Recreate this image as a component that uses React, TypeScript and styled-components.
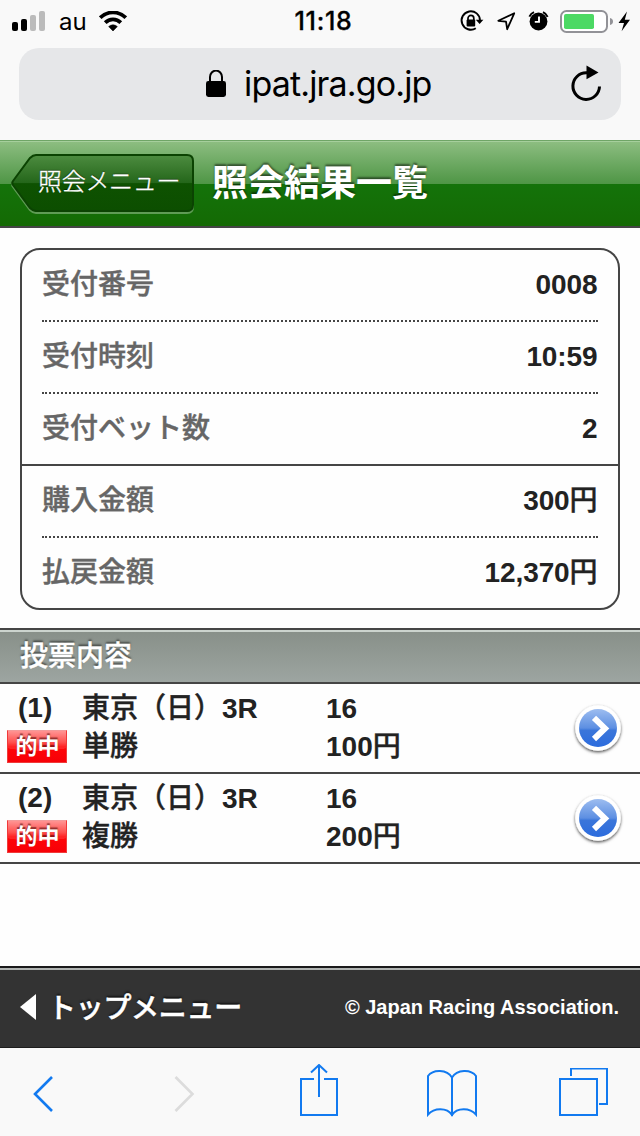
import React from "react";
import styled, { createGlobalStyle } from "styled-components";

const Global = createGlobalStyle`
  *, *::before, *::after { box-sizing: border-box; }
  body {
    margin: 0;
    background: #fff;
    font-family: "Liberation Sans", "Noto Sans CJK JP", sans-serif;
    color: #222;
  }
`;

const Screen = styled.div`
  width: 640px;
  height: 1136px;
  display: flex;
  flex-direction: column;
  overflow: hidden;
  background: #fefefe;
`;

const BrowserTop = styled.header`
  height: 140px;
  background: #f9f9f9;
  font-family: Inter, sans-serif;
  color: #000;
`;

const StatusBar = styled.div`
  height: 40px;
  padding: 0 10px 0 12px;
  display: grid;
  grid-template-columns: 1fr auto 1fr;
  align-items: center;
`;

const StatusGroup = styled.div<{ $end?: boolean }>`
  display: flex;
  align-items: center;
  justify-content: ${(p) => (p.$end ? "flex-end" : "flex-start")};
  padding-bottom: ${(p) => (p.$end ? "2px" : "0")};
  svg { display: block; flex: none; }
`;

const Carrier = styled.span`
  font-size: 24px;
  line-height: 40px;
  width: 27px;
  margin: 0 13px 0 13px;
  padding-top: 2px;
  height: 42px;
`;

const Clock = styled.span`
  font-size: 25px;
  font-weight: 500;
  line-height: 40px;
  letter-spacing: 0.7px;
  -webkit-text-stroke: 0.3px #000;
  margin-left: 5px;
`;

const AddressBar = styled.div`
  height: 72px;
  margin: 8px 19px 0;
  border-radius: 20px;
  background: #e6e7e9;
  display: flex;
  align-items: center;
  padding: 0 18px 0 186px;
`;

const Url = styled.span`
  flex: 1;
  margin-left: 17px;
  font-size: 34px;
  line-height: 74px;
  letter-spacing: -0.85px;
`;

const TitleBar = styled.div`
  height: 88px;
  border-top: 1px solid #6fa566;
  border-bottom: 2px solid #454545;
  background: linear-gradient(#a6cf9c 0 1px, #8cbd80 1px, #4f9646 50%, #14730a 50%, #146a04 100%);
  background-clip: padding-box;
  display: flex;
  align-items: center;
`;

const BackButton = styled.div`
  position: relative;
  width: 186px;
  height: 62px;
  margin-left: 9px;
  svg { position: absolute; inset: 0; }
`;

const BackLabel = styled.span`
  position: relative;
  display: block;
  padding-left: 29px;
  font-size: 24px;
  line-height: 57px;
  letter-spacing: -0.3px;
  font-weight: 300;
  -webkit-text-stroke: 0.35px #fff;
  color: #fff;
  text-shadow: 0 -1px 1px rgba(0, 0, 0, 0.5);
`;

const Title = styled.h1`
  margin: 0 0 0 17px;
  font-size: 36px;
  line-height: 86px;
  font-weight: 700;
  color: #fff;
  text-shadow: 0 -2px 2px rgba(0, 0, 0, 0.5);
`;

const Summary = styled.section`
  margin: 20px 20px 18px;
  border: 2px solid #454545;
  border-radius: 20px;
`;

const SummaryGroup = styled.div`
  padding: 0 20px;
  & + & { border-top: 2px solid #454545; }
`;

const SummaryRow = styled.div`
  display: flex;
  justify-content: space-between;
  height: 70px;
  font-size: 28px;
  line-height: 70px;
  font-weight: 700;
  & + & {
    height: 72px;
    border-top: 2px dotted #454545;
  }
`;

const Label = styled.span`
  color: #666;
  font-weight: 500;
  -webkit-text-stroke: 0.4px #666;
`;

const Value = styled.span`
  letter-spacing: -0.1px;
  padding-right: 0.5px;
`;

const SectionTitle = styled.h2`
  margin: 0;
  height: 56px;
  padding-left: 20px;
  border-top: 2px solid #454545;
  border-bottom: 2px solid #454545;
  background: linear-gradient(#ccd4ce 0 2px, #889089 2px, #9da5a1 100%);
  background-clip: padding-box;
  color: #fff;
  font-size: 28px;
  font-weight: 500;
  -webkit-text-stroke: 0.4px #fff;
  line-height: 54px;
  text-shadow: 0 -2px 2px rgba(0, 0, 0, 0.5);
`;

const BetRow = styled.div`
  height: 90px;
  border-bottom: 2px solid #454545;
  display: grid;
  grid-template-columns: 82px 244px 1fr 49px;
  padding: 6px 18px 6px 0;
  font-size: 28px;
  line-height: 38px;
  font-weight: 700;
`;

const BetCell = styled.div`
  display: flex;
  flex-direction: column;
`;

const Kanji = styled.span`
  font-weight: 500;
  -webkit-text-stroke: 0.4px #222;
`;

const BetNumber = styled.span`
  padding-left: 18px;
  line-height: 36px;
  height: 38px;
`;

const HitBadge = styled.span`
  width: 60px;
  height: 33px;
  margin: 2px 0 0 7px;
  padding-left: 1px;
  border: 1px solid #f03a3a;
  border-top-color: #f39a9a;
  background:
    radial-gradient(ellipse 60px 20px at 50% 0, rgba(255, 255, 255, 0.12) 98%, transparent 100%),
    linear-gradient(#ff8584, #ff3a38 36%, #ff0608 50%, #f70007);
  color: #fff;
  font-size: 22px;
  line-height: 32px;
  text-align: center;
  text-shadow: 0 -2px 1px rgba(60, 0, 0, 0.55);
`;

const Go = styled.svg`
  display: block;
  align-self: center;
  margin: 2px 0 0 -2px;
`;

const Gap = styled.div`
  flex: 1;
`;

const Footer = styled.footer`
  height: 82px;
  border-top: 2px solid #1a1a1a;
  border-bottom: 1px solid #1d1d1d;
  background: linear-gradient(#b0b4b2 0 2px, #333 2px);
  background-clip: padding-box;
  color: #fff;
  display: flex;
  align-items: center;
  justify-content: space-between;
  padding: 0 21px 0 20px;
`;

const TopLink = styled.span`
  display: flex;
  align-items: center;
  font-size: 28px;
  line-height: 78px;
  padding-top: 2px;
  font-weight: 500;
  -webkit-text-stroke: 0.5px #fff;
  letter-spacing: -0.3px;
  text-shadow: 0 -2px 2px rgba(0, 0, 0, 0.6);
  svg { margin: 0 12px 3px 0; }
`;

const Copyright = styled.span`
  font-size: 20px;
  font-weight: 700;
  line-height: 76px;
  padding-bottom: 2px;
`;

const Toolbar = styled.nav`
  height: 88px;
  background: #f9f9f9;
  display: grid;
  grid-template-columns: 141px 126px 127px 132px 50px;
  align-items: center;
  padding: 2px 0 0 33px;
  svg { display: block; }
`;

const summary = [
  [
    { label: "受付番号", value: "0008" },
    { label: "受付時刻", value: "10:59" },
    { label: "受付ベット数", value: "2" },
  ],
  [
    { label: "購入金額", value: "300", unit: "円" },
    { label: "払戻金額", value: "12,370", unit: "円" },
  ],
] as { label: string; value: string; unit?: string }[][];

const bets = [
  { no: "(1)", kind: "単勝", amount: "100" },
  { no: "(2)", kind: "複勝", amount: "200" },
];

const GoIcon = ({ id }: { id: string }) => (
  <Go width="54" height="56" viewBox="0 0 54 56">
    <defs>
      <linearGradient id={`${id}b`} x1="0" y1="0" x2="0" y2="1">
        <stop offset="0" stopColor="#9dbdf0" />
        <stop offset="0.5" stopColor="#5d8fe2" />
        <stop offset="0.56" stopColor="#3b76da" />
        <stop offset="1" stopColor="#2c6cdd" />
      </linearGradient>
      <filter id={`${id}s`} x="-20%" y="-20%" width="140%" height="150%">
        <feDropShadow dx="0" dy="1.5" stdDeviation="1.8" floodColor="#000" floodOpacity="0.7" />
      </filter>
    </defs>
    <circle cx="27" cy="27" r="22.8" fill="#fff" filter={`url(#${id}s)`} />
    <circle cx="27" cy="27" r="19" fill={`url(#${id}b)`} />
    <path d="M23 16.8 34 27.4 23 38" fill="none" stroke="#fff" strokeWidth="6" />
  </Go>
);

export default function App() {
  return (
    <Screen>
      <Global />
      <BrowserTop>
        <StatusBar>
          <StatusGroup>
            <svg width="34" height="20" viewBox="0 0 34 20">
              <rect x="0" y="11" width="6" height="9" rx="2" />
              <rect x="9" y="8" width="6" height="12" rx="2" />
              <rect x="18" y="4" width="6" height="16" rx="2" fill="#bbb" />
              <rect x="27" y="0" width="6" height="20" rx="2" fill="#bbb" />
            </svg>
            <Carrier>au</Carrier>
            <svg width="28" height="20" viewBox="0 0 28 20">
              <g fill="none" stroke="#000" strokeWidth="3.8">
                <path d="M1.2 6.7A18.2 18.2 0 0 1 26.8 6.7" />
                <path d="M6.2 11.6A11 11 0 0 1 21.8 11.6" />
              </g>
              <path d="M14 20 9.7 15.6A6.2 6.2 0 0 1 18.3 15.6Z" stroke="#000" strokeWidth="0.6" />
            </svg>
          </StatusGroup>
          <Clock>11:18</Clock>
          <StatusGroup $end>
            <svg width="172" height="26" viewBox="0 0 172 26">
              <g fill="none" stroke="#000" strokeWidth="1.9">
                <path d="M17.8 21.2A9.2 9.2 0 1 1 22 13.5" />
                <path d="M10 13.5V11.3A2.9 2.9 0 0 1 15.8 11.3V13.5" strokeWidth="1.7" />
                <path d="M40.3 13.8 56.2 6.3 49.2 22.2 48 14.6Z" strokeLinejoin="round" strokeWidth="1.8" />
              </g>
              <rect x="8.6" y="12.6" width="8.6" height="6.8" rx="1" />
              <path d="M17.8 12.8H25.4L21.6 17Z" />
              <circle cx="80.5" cy="14.5" r="8.9" />
              <path d="M71.4 9.6A9 9 0 0 1 76 5.2M85 5.2a9 9 0 0 1 4.6 4.6" stroke="#000" strokeWidth="2" fill="none" />
              <path d="M81 9.6V14.9H76.8" stroke="#fff" strokeWidth="1.9" fill="none" />
              <rect x="103" y="4" width="46" height="21" rx="5.5" fill="#fff" stroke="#929297" strokeWidth="2" />
              <rect x="106" y="7" width="30" height="15" rx="1.8" fill="#4cd964" />
              <path d="M152 11q3 .8 3 3.5t-3 3.5Z" fill="#929297" />
              <path d="M169 4.5 160.500 16H166L163.600 24.300 172 12.800H166.800Z" />
            </svg>
          </StatusGroup>
        </StatusBar>
        <AddressBar>
          <svg width="22" height="28" viewBox="0 0 22 28">
            <rect x="1" y="11" width="20" height="16" rx="2.4" />
            <path d="M5 12.5V7A6 6.4 0 0 1 17 7V12.5" fill="none" stroke="#000" strokeWidth="2" />
          </svg>
          <Url>ipat.jra.go.jp</Url>
          <svg width="34" height="38" viewBox="0 0 34 38">
            <path d="M30.5 21.5A13.3 13.3 0 1 1 17.5 7.8H21" fill="none" stroke="#000" strokeWidth="3" />
            <path d="M17.5 .6 29.5 7.6 17.5 14.2Z" />
          </svg>
        </AddressBar>
      </BrowserTop>

      <TitleBar>
        <BackButton>
          <svg width="186" height="62" viewBox="0 0 186 62">
            <defs>
              <linearGradient id="back" x1="0" y1="0" x2="0" y2="1">
                <stop offset="0" stopColor="#4d8c40" />
                <stop offset="0.5" stopColor="#24661a" />
                <stop offset="0.51" stopColor="#0e5201" />
                <stop offset="1" stopColor="#0c4e00" />
              </linearGradient>
            </defs>
            <path d="M27 3H178Q184 3 184 9V53Q184 59 178 59H27Q24 59 21 56L4 33Q2.5 31 4 29L21 6Q24 3 27 3Z" transform="translate(0 1)" fill="none" stroke="#5f9b55" strokeWidth="2" />
            <path d="M27 2H178Q184 2 184 8V52Q184 58 178 58H27Q24 58 21 55L4 32Q2.5 30 4 28L21 5Q24 2 27 2Z" fill="url(#back)" stroke="#0b4302" strokeWidth="2" />
          </svg>
          <BackLabel>照会メニュー</BackLabel>
        </BackButton>
        <Title>照会結果一覧</Title>
      </TitleBar>

      <Summary>
        {summary.map((group, i) => (
          <SummaryGroup key={i}>
            {group.map((row) => (
              <SummaryRow key={row.label}>
                <Label>{row.label}</Label>
                <Value>
                  {row.value}
                  {row.unit && <Kanji>{row.unit}</Kanji>}
                </Value>
              </SummaryRow>
            ))}
          </SummaryGroup>
        ))}
      </Summary>

      <SectionTitle>投票内容</SectionTitle>
      {bets.map((bet, i) => (
        <BetRow key={bet.no}>
          <BetCell>
            <BetNumber>{bet.no}</BetNumber>
            <HitBadge>的中</HitBadge>
          </BetCell>
          <BetCell>
            <span><Kanji>東京（日）</Kanji>3R</span>
            <Kanji>{bet.kind}</Kanji>
          </BetCell>
          <BetCell>
            <span>16</span>
            <span>{bet.amount}<Kanji>円</Kanji></span>
          </BetCell>
          <GoIcon id={`go${i}`} />
        </BetRow>
      ))}
      <Gap />

      <Footer>
        <TopLink>
          <svg width="16" height="26" viewBox="0 0 16 26">
            <path d="M0 13 16 0V26Z" fill="#fff" />
          </svg>
          トップメニュー
        </TopLink>
        <Copyright>© Japan Racing Association.</Copyright>
      </Footer>

      <Toolbar>
        <svg width="22" height="38" viewBox="0 0 22 38">
          <path d="M19 3 2 20 19 37" fill="none" stroke="#127af0" strokeWidth="2.6" />
        </svg>
        <svg width="22" height="38" viewBox="0 0 22 38">
          <path d="M1.5 3 18.5 20 1.5 37" fill="none" stroke="#dcdcdc" strokeWidth="2.6" />
        </svg>
        <svg width="40" height="58" viewBox="0 0 40 58" fill="none" stroke="#127af0" strokeWidth="2">
          <path d="M14 15H1V51H37V15H24M19 33V1.500M11 8.500 19 1 27 8.500" />
        </svg>
        <svg width="52" height="50" viewBox="0 0 52 50" fill="none" stroke="#127af0" strokeWidth="2">
          <path d="M25 48V9.500C20 1 6 1 1 8V46.500C7 39.500 20 39 25 47C30 39 43 39.500 49 46.500V8C44 1 30 1 25 9.500" />
        </svg>
        <svg width="50" height="50" viewBox="0 0 50 50" fill="none" stroke="#127af0" strokeWidth="2">
          <path d="M1 11H38V47H1ZM12 8V0.500H48V36H40" />
        </svg>
      </Toolbar>
    </Screen>
  );
}
